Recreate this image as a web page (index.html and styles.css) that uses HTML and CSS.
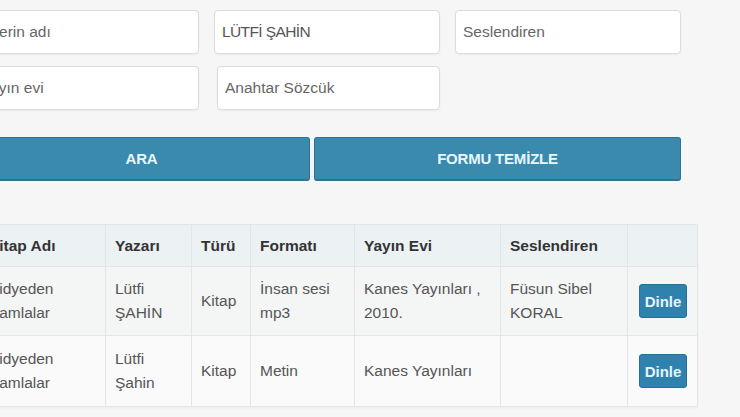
FILE: index.html
```html
<!DOCTYPE html>
<html lang="tr">
<head>
<meta charset="utf-8">
<title>Arama</title>
<link rel="stylesheet" href="styles.css">
</head>
<body>
<div class="page">
  <form class="search">
    <div class="fields">
      <input class="field" type="text" placeholder="Eserin adı">
      <input class="field field-filled" type="text" value="LÜTFİ ŞAHİN">
      <input class="field" type="text" placeholder="Seslendiren">
      <input class="field" type="text" placeholder="Yayın evi">
      <input class="field field-shift" type="text" placeholder="Anahtar Sözcük">
    </div>
    <div class="actions">
      <button type="button" class="btn btn-search">ARA</button>
      <button type="button" class="btn btn-clear">FORMU TEMİZLE</button>
    </div>
  </form>

  <table class="results">
    <thead>
      <tr>
        <th class="c-title">Kitap Adı</th>
        <th class="c-author">Yazarı</th>
        <th class="c-type">Türü</th>
        <th class="c-format">Formatı</th>
        <th class="c-pub">Yayın Evi</th>
        <th class="c-voice">Seslendiren</th>
        <th class="c-act"></th>
      </tr>
    </thead>
    <tbody>
      <tr class="row-a">
        <td>Hidyeden Damlalar</td>
        <td>Lütfi ŞAHİN</td>
        <td>Kitap</td>
        <td>İnsan sesi mp3</td>
        <td>Kanes Yayınları , 2010.</td>
        <td>Füsun Sibel KORAL</td>
        <td class="c-act"><button type="button" class="listen">Dinle</button></td>
      </tr>
      <tr class="row-b">
        <td>Hidyeden Damlalar</td>
        <td>Lütfi Şahin</td>
        <td>Kitap</td>
        <td>Metin</td>
        <td>Kanes Yayınları</td>
        <td></td>
        <td class="c-act"><button type="button" class="listen">Dinle</button></td>
      </tr>
    </tbody>
  </table>
</div>
</body>
</html>
```

FILE: styles.css
```css
* { box-sizing: border-box; }

html, body {
  margin: 0;
  padding: 0;
  background: #f6f6f6;
  overflow: hidden;
}

body {
  font-family: "Liberation Sans", Arial, sans-serif;
  color: #555;
}

.page {
  width: 740px;
  height: 417px;
  padding-top: 10px;
}

.search {
  margin-left: -27px;
  width: 708px;
}

.fields {
  display: grid;
  grid-template-columns: 226px 226px 226px;
  column-gap: 15px;
  row-gap: 12px;
}

.field {
  height: 44px;
  border: 1px solid #dcdcdc;
  border-radius: 4px;
  background: #fff;
  padding: 0 7px;
  font-family: inherit;
  font-size: 15.5px;
  color: #555;
  box-shadow: 0 1px 2px rgba(0, 0, 0, 0.05);
  outline: none;
}

.field::placeholder { color: #666; }

.field-filled { letter-spacing: -0.6px; }

.field-shift { margin-left: 3px; }

.actions {
  display: grid;
  grid-template-columns: 337px 367px;
  column-gap: 4px;
  margin-top: 27px;
}

.btn {
  height: 44px;
  border: 1px solid #2c7394;
  border-bottom-width: 2px;
  border-radius: 3px;
  background: #3a8aad;
  color: #e8f6fb;
  font-family: inherit;
  font-size: 15px;
  font-weight: bold;
  letter-spacing: -0.2px;
  padding: 0;
}

.results {
  margin-top: 43px;
  margin-left: -22px;
  width: 719px;
  border-collapse: collapse;
  table-layout: fixed;
  border: 1px solid #e1e5e7;
  font-size: 15.5px;
  box-shadow: 0 1px 2px rgba(0, 0, 0, 0.04);
}

.results th,
.results td {
  border: 1px solid #e3e6e8;
  padding: 0 8px 0 9px;
  text-align: left;
  vertical-align: middle;
  line-height: 24px;
}

.results th {
  height: 42px;
  background: #ecf1f3;
  color: #333;
  font-weight: bold;
}

.row-a td { height: 69px; background: #f4f5f5; }
.row-b td { height: 71px; background: #fafafa; }

.c-title  { width: 127px; }
.c-author { width: 86px; }
.c-type   { width: 59px; }
.c-format { width: 104px; }
.c-pub    { width: 146px; }
.c-voice  { width: 127px; }
.c-act    { width: 70px; }

.results td.c-act { padding: 0 0 0 11px; }

.listen {
  width: 48px;
  height: 34px;
  border: 1px solid #276f94;
  border-radius: 3px;
  background: #2f82ad;
  color: #e6f5fc;
  font-family: inherit;
  font-size: 15px;
  font-weight: bold;
  padding: 0;
  display: block;
}
```
